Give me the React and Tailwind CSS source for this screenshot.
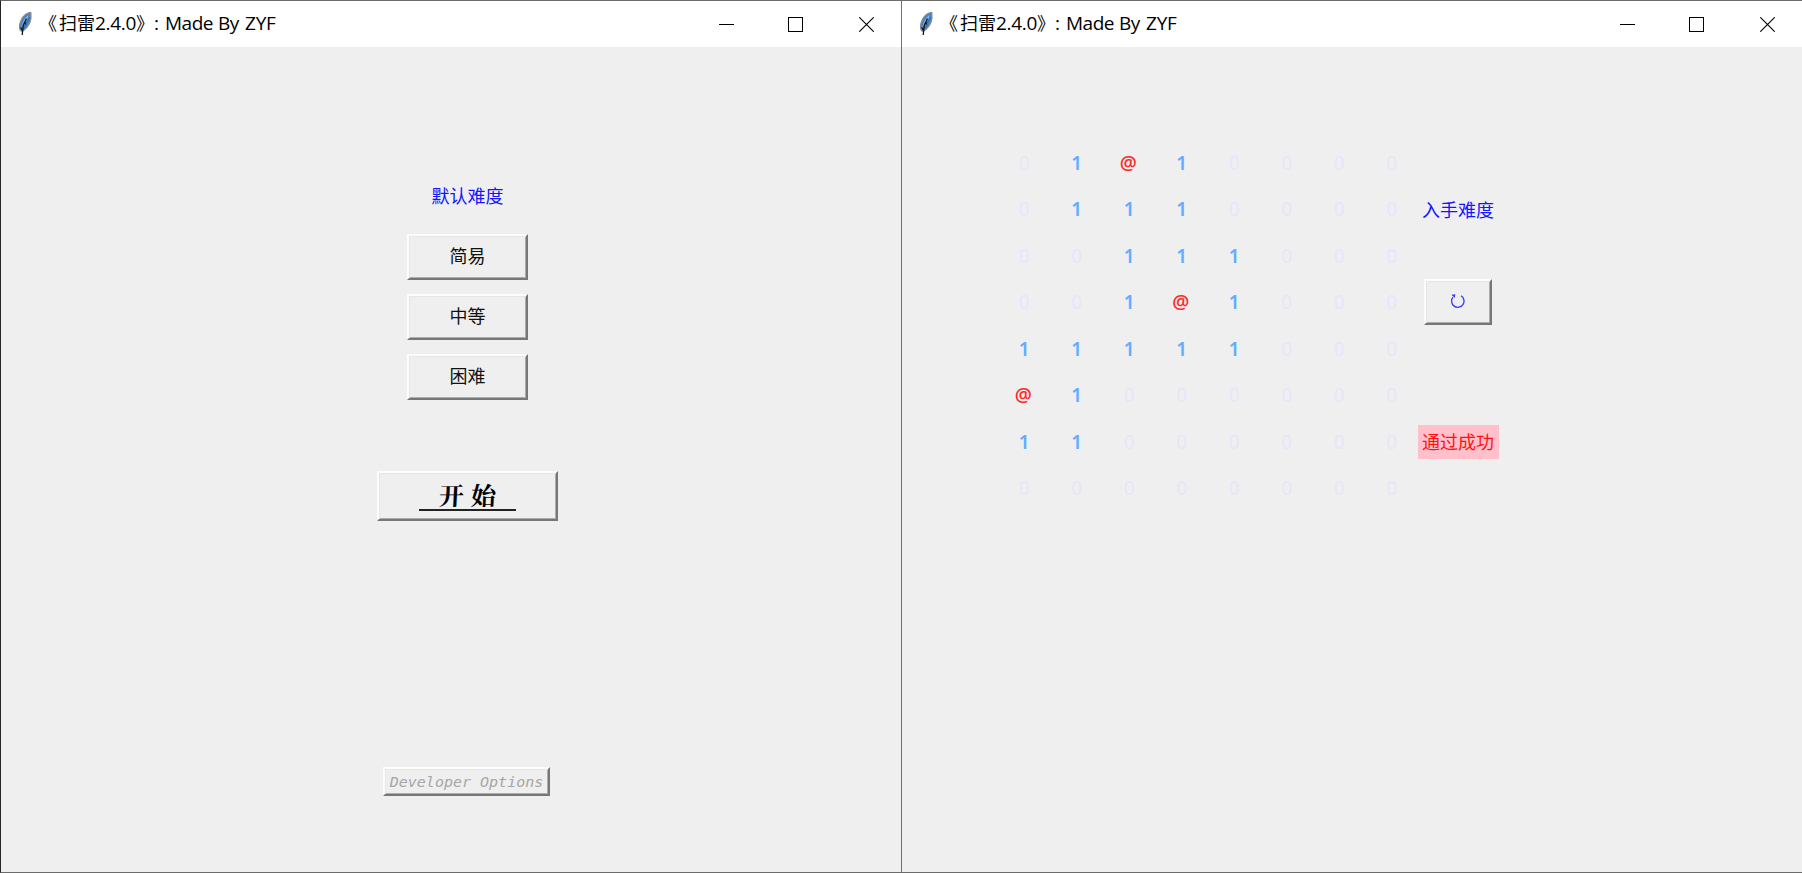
import React from "react";

const board = [
  "01@10000",
  "01110000",
  "00111000",
  "001@1000",
  "11111000",
  "@1000000",
  "11000000",
  "00000000",
];

function Feather() {
  return (
    <svg className="block shrink-0" width="14" height="24" viewBox="0 0 14 24">
      <path d="M12.800 .6C9.500 .4 5.200 3.400 3 8.400 1.400 12 1 15.500 2.500 18.500L3.900 19.300C8 17.500 12.300 12 12.900 6.500Z" fill="#4682c4" stroke="#858a90" strokeWidth="1.300" />
      <path d="M10.500 3C7 5.500 4.300 10 3.300 15L6 12.500 9.500 7.500Z" fill="#8abcf0" />
      <path d="M11.500 5.500 8.500 10 7.800 13.500 5 17" stroke="#2f74bd" strokeWidth="1.600" fill="none" />
      <path d="M8.500 6.500 5.300 13 4.200 23M7 9.500 7.300 12.500M2.600 15.500 4.500 18.500" stroke="#10161e" strokeWidth="1.300" fill="none" />
    </svg>
  );
}

function TitleBar() {
  return (
    <header className="flex h-[46px] shrink-0 items-center bg-white pl-[17px] text-black">
      <Feather />
      <h1 className="ml-[7px] flex h-[46px] flex-1 items-center whitespace-nowrap pb-[2px] font-['Open_Sans','Noto_Sans_CJK_SC',sans-serif] text-[19px] leading-none">
        <span className="w-[20px] text-[18px]">《</span>
        <span className="w-[36px] text-[18px]">扫雷</span>
        <span className="w-[41px] tracking-[-0.300px]">2.4.0</span>
        <span className="w-[18px] text-[18px]">》</span>
        <span className="w-[11px]">:</span>
        <span className="w-[53px] tracking-[-0.500px]">Made</span>
        <span className="w-[27px] tracking-[-0.400px]">By</span>
        <span className="tracking-[-0.200px]">ZYF</span>
      </h1>
      <div className="flex items-center pr-[27px]">
        <svg width="15" height="15" viewBox="0 0 15 15" shapeRendering="crispEdges">
          <path d="M0 7.500H15" stroke="#000" />
        </svg>
        <svg className="ml-[54px]" width="15" height="15" viewBox="0 0 15 15" shapeRendering="crispEdges">
          <path d="M.5 .5H14.500V14.500H.5Z" stroke="#000" fill="none" />
        </svg>
        <svg className="ml-[56px]" width="15" height="15" viewBox="0 0 15 15">
          <path d="M.3 .3 14.700 14.700M14.700 .3.3 14.700" stroke="#000" strokeWidth="1.100" fill="none" />
        </svg>
      </div>
    </header>
  );
}

function TkButton({ className, children }) {
  return (
    <button
      className={
        "flex shrink-0 items-center justify-center whitespace-nowrap border-2 border-t-[#fcfcfc] border-l-[#fcfcfc] border-r-[#777777] border-b-[#777777] bg-[#efefef] shadow-[inset_1px_1px_0_#e6e6e6,inset_-1px_-1px_0_#acacac] " +
        className
      }
    >
      {children}
    </button>
  );
}

function Cell({ value }) {
  if (value === "@") {
    return <span className="-translate-x-px font-['Open_Sans',sans-serif] text-[19px] font-semibold text-[#ff2a2a]">@</span>;
  }
  if (value === "1") {
    return <span className="text-[19px] font-semibold text-[#62adff]">1</span>;
  }
  return <span className="text-[19px] text-[#e6e6fa]">0</span>;
}

export default function App() {
  return (
    <main className="flex h-[873px] w-[1802px] overflow-hidden bg-[#efefef] font-['Noto_Sans_CJK_SC',sans-serif] text-[18px] leading-none">
      <section className="flex w-[902px] flex-col border border-t-[#6b6b6b] border-r-[#707070] border-b-[#6b6b6b] border-l-[#252525]">
        <TitleBar />
        <div className="flex w-[933px] flex-1 flex-col items-center">
          <p className="mt-[139px] h-[18px] text-[#1414ff]">默认难度</p>
          <div className="mt-[30px] flex flex-col gap-[14px]">
            <TkButton className="h-[46px] w-[121px] pb-[4px] text-[#111]">简易</TkButton>
            <TkButton className="h-[46px] w-[121px] pb-[4px] text-[#111]">中等</TkButton>
            <TkButton className="h-[46px] w-[121px] pb-[4px] text-[#111]">困难</TkButton>
          </div>
          <TkButton className="mt-[71px] h-[50px] w-[181px] text-black">
            <span className="flex h-[30px] w-[97px] items-center justify-center gap-[7px] border-b-2 border-[#222] pb-px font-['AR_PL_UKai_CN','KaiTi','Noto_Serif_CJK_SC','Noto_Sans_CJK_SC',serif] text-[25px] font-bold">
              <span className="-skew-x-3">开</span>
              <span className="-skew-x-3">始</span>
            </span>
          </TkButton>
          <TkButton className="mt-[246px] mr-[2px] h-[29px] w-[167px] font-['DejaVu_Sans_Mono',monospace] text-[15px] italic text-[#a6a6a6]">
            <span className="inline-block translate-y-px scale-y-90">Developer Options</span>
          </TkButton>
        </div>
      </section>

      <section className="flex w-[900px] flex-col border-t border-b border-[#6b6b6b]">
        <TitleBar />
        <div className="flex flex-1 items-start">
          <div className="mt-[93px] ml-[96px] grid grid-cols-[repeat(8,52.500px)] grid-rows-[repeat(8,46.500px)] font-['Noto_Sans',sans-serif]">
            {board.flatMap((row, r) =>
              [...row].map((value, c) => (
                <div key={r + "-" + c} className="flex items-center justify-center">
                  <Cell value={value} />
                </div>
              ))
            )}
          </div>
          <div className="flex w-[81px] flex-col items-center">
            <p className="mt-[153px] mr-px h-[18px] whitespace-nowrap text-[#1414ff]">入手难度</p>
            <TkButton className="mt-[61px] mr-[2px] h-[46px] w-[68px] pb-[2px]">
              <svg width="15" height="16" viewBox="0 0 15 16">
                <path d="M11 2.800A6.200 6.200 0 1 1 3 4.200" fill="none" stroke="#3838ff" strokeWidth="1.300" />
                <path d="M1.500 1.800 5.300 1.200 4.800 5Z" fill="#3838ff" />
              </svg>
            </TkButton>
            <p className="mt-[100px] flex h-[34px] w-[81px] items-center justify-center whitespace-nowrap bg-[#ffc0cb] pr-px pb-[2px] text-[#ff1010]">
              通过成功
            </p>
          </div>
        </div>
      </section>
    </main>
  );
}
